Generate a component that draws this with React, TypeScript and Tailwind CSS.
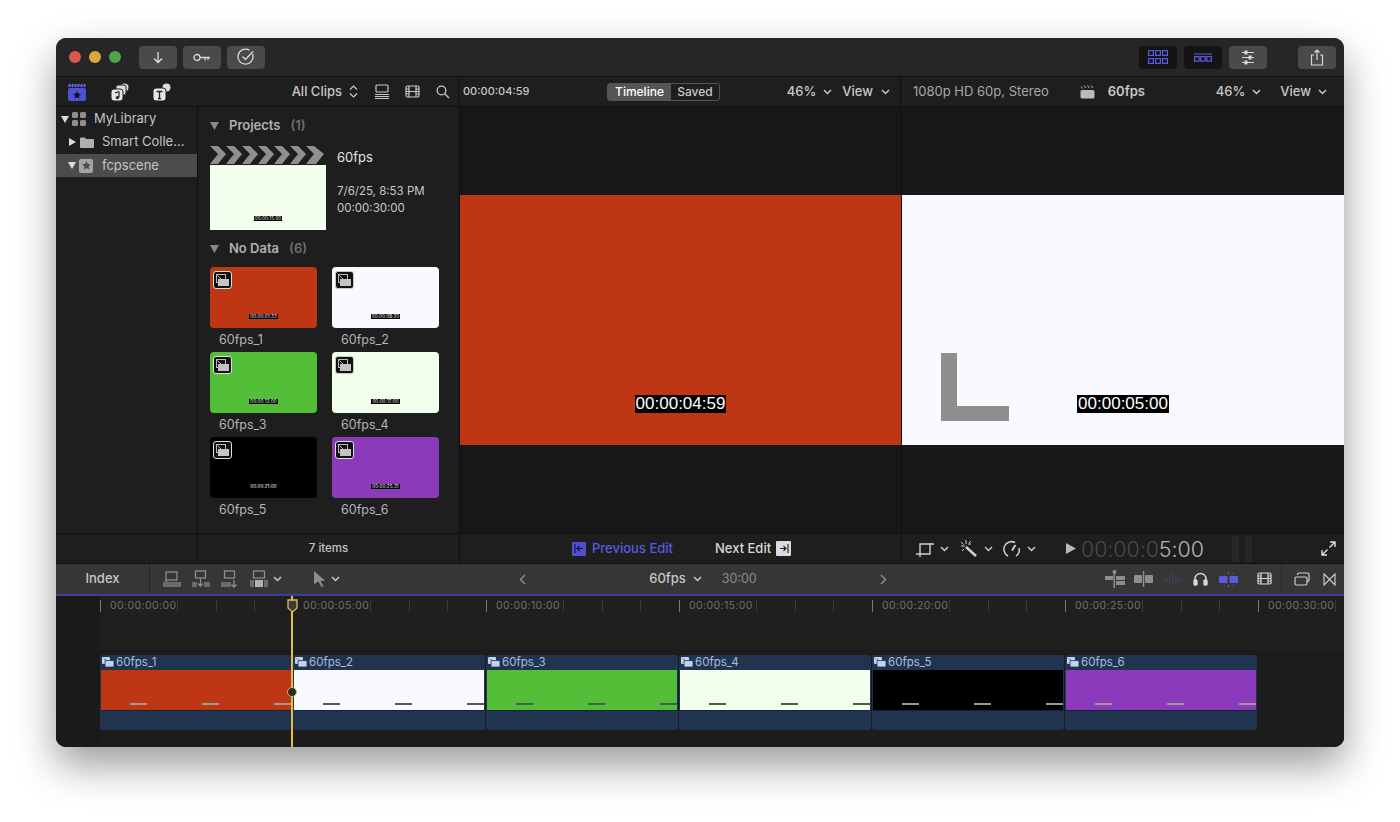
import React from "react";

const FONT = { fontFamily: "Inter, 'Liberation Sans', sans-serif" };

const Chevron = ({ className = "text-[#c8c8c8]" }: { className?: string }) => (
  <svg width="9" height="6" viewBox="0 0 9 6" className={className}>
    <path d="M1 1l3.5 3.5L8 1" fill="none" stroke="currentColor" strokeWidth="1.5" />
  </svg>
);

const TitleButton = ({ children, dark }: { children: React.ReactNode; dark?: boolean }) => (
  <div className={`w-[38px] h-[23px] rounded-[4px] flex items-center justify-center ${dark ? "bg-[#141414]" : "bg-[#4a4a4a]"}`}>
    {children}
  </div>
);

const ClapperIcon = () => (
  <svg width="20" height="20" viewBox="0 0 20 20">
    <rect x="1" y="6" width="18" height="13" rx="2" fill="#4f4fd8" />
    <path d="M2 5l1-3 M5 5l1-3 M8 5l1-3 M11 5l1-3 M14 5l1-3 M17 5l1-3" stroke="#6a6af0" strokeWidth="2" />
    <path d="M10 9l1.2 2.6 2.8.3-2.1 1.9.6 2.8-2.5-1.4-2.5 1.4.6-2.8L6 11.9l2.8-.3z" fill="#111" />
  </svg>
);

const MusicIcon = () => (
  <svg width="20" height="20" viewBox="0 0 20 20">
    <circle cx="14.5" cy="5.5" r="4.5" fill="#ddd" stroke="#222" />
    <rect x="6" y="3" width="10" height="10" rx="2" fill="#ddd" stroke="#222" />
    <rect x="1" y="7" width="12" height="12" rx="3" fill="#e6e6e6" stroke="#222" />
    <path d="M9 9.5v6M5 11l4-1.5" stroke="#222" strokeWidth="1.2" fill="none" />
    <circle cx="7.4" cy="15.6" r="1.6" fill="#222" />
  </svg>
);

const TitleIcon = () => (
  <svg width="20" height="20" viewBox="0 0 20 20">
    <circle cx="14.5" cy="5.5" r="4.5" fill="#ddd" stroke="#222" />
    <rect x="1" y="6" width="13" height="13" rx="3" fill="#e6e6e6" stroke="#222" />
    <path d="M4.5 9.5h6M7.5 9.5v7M6 16.5h3" stroke="#222" strokeWidth="1.3" fill="none" />
  </svg>
);

const StackIcon = () => (
  <svg width="14" height="16" viewBox="0 0 14 16" fill="none" stroke="#c8c8c8">
    <rect x="1" y="1" width="12" height="7" rx="1" strokeWidth="1.2" />
    <path d="M0 10.5h14M0 12.5h14M0 14.5h14" strokeWidth="1.2" />
  </svg>
);

const FilmIcon = ({ color = "#c8c8c8" }: { color?: string }) => (
  <svg width="15" height="14" viewBox="0 0 15 14" fill="none" stroke={color} strokeWidth="1.2">
    <rect x="1" y="1" width="13" height="11" rx="1.5" />
    <path d="M4 1v11M11 1v11M1 4h3M1 6.5h3M1 9h3M11 4h3M11 6.5h3M11 9h3M4 6.5h7" />
  </svg>
);

const ClipBadge = ({ size = 12, color = "#c3d2ee" }: { size?: number; color?: string }) => (
  <svg width={size} height={size * 0.84} viewBox="0 0 12 10">
    <rect x="0" y="0" width="8" height="7" rx="1" fill={color} />
    <rect x="3" y="3.5" width="9" height="6.5" rx="1" fill={color} stroke="#21344f" strokeWidth="0.8" />
    <path d="M2 1.5L4.5 4" stroke="#21344f" strokeWidth="0.8" />
  </svg>
);

const ThumbBadge = ({ light }: { light?: boolean }) => (
  <div className={`w-[19px] h-[18px] rounded-[3px] bg-[#111] border ${light ? "border-[#c9c9c9]" : "border-[#e0e0e0]"} flex items-center justify-center`}>
    <svg width="13" height="12" viewBox="0 0 13 12">
      <rect x="0.5" y="0.5" width="9" height="8" fill="none" stroke="#bbb" />
      <path d="M4 5h9v7H2V5z" fill="#c4c4c4" />
      <path d="M1.5 1.5L5 5" stroke="#bbb" />
    </svg>
  </div>
);

const Stamp = ({ text, dark }: { text: string; dark?: boolean }) => (
  <span className={`text-[4.5px] leading-[5px] tracking-[0.1px] px-[1px] ${dark ? "text-white" : "bg-black text-white"}`}>{text}</span>
);

const Thumb = ({ color, time, label, dark, light }: { color: string; time: string; label: string; dark?: boolean; light?: boolean }) => (
  <div className="w-[107px]">
    <div className="h-[61px] rounded-[4px] pt-[4px] pl-[3px] flex flex-col justify-between pb-[9px]" style={{ backgroundColor: color }}>
      <ThumbBadge light={light} />
      <div className="flex justify-center pr-[3px]">
        <Stamp text={time} dark={dark} />
      </div>
    </div>
    <div className="pl-[9px] mt-[5px] text-[12.5px] leading-[14px] text-[#b4b4b4]">{label}</div>
  </div>
);

const TimelineClip = ({ name, color, dark, firstOffset = 0 }: { name: string; color: string; dark?: boolean; firstOffset?: number }) => (
  <div className="w-[192px] h-[75px] rounded-[3px] bg-[#21344f] px-[1px] flex flex-col">
    <div className="h-[15px] flex items-center gap-[2px] pl-[1px] text-[11.5px] text-[#a9bcdd]">
      <ClipBadge />
      {name}
    </div>
    <div className="h-[41px] border-b border-[#14243d] flex items-end pb-[5px] justify-between" style={{ backgroundColor: color, paddingLeft: firstOffset }}>
      {[0, 1, 2].map((i) => (
        <span key={i} className={`w-[17px] h-[2px] ${dark ? "bg-[#999]" : "bg-[#555]"}`} />
      ))}
    </div>
  </div>
);

const Ruler = () => {
  const labels = ["00:00:00:00", "00:00:05:00", "00:00:10:00", "00:00:15:00", "00:00:20:00", "00:00:25:00", "00:00:30:00"];
  return (
    <div className="h-[17px] flex pt-[4px]">
      {labels.map((l, i) => (
        <div key={l} className="w-[193px] shrink-0 h-[12px] flex border-l border-[#7a7a7a]">
          <div className="w-[38.6px] shrink-0 border-r border-[#333]" />
          <div className="w-[38.6px] shrink-0 border-r border-[#3a3a3a]" />
          <div className="w-[38.6px] shrink-0 border-r border-[#3a3a3a]" />
          <div className="w-[38.6px] shrink-0 border-r border-[#3a3a3a]" />
          <span className="absolute ml-[9px] text-[10.5px] leading-[12px] tracking-[0.4px] text-[#707070]">{l}</span>
        </div>
      ))}
    </div>
  );
};

const Viewer = ({ bg, time, children }: { bg: string; time: string; children?: React.ReactNode }) => (
  <div className="flex-1 flex items-center bg-[#171717]">
    <div className="relative w-full h-[250px] flex items-end justify-center pb-[32px]" style={{ backgroundColor: bg }}>
      {children}
      <span className="bg-black text-white text-[17px] leading-[18px] px-[1px]" style={{ fontFamily: "'Liberation Sans', sans-serif" }}>{time}</span>
    </div>
  </div>
);

const EditIcons = () => (
  <>
    <svg width="18" height="16" viewBox="0 0 18 16" fill="none" stroke="#8e8e8e" strokeWidth="1.3"><rect x="3" y="1" width="11" height="8" /><path d="M3 9v2" /><rect x="0" y="11" width="18" height="5" fill="#6b6b6b" stroke="none" /></svg>
    <svg width="18" height="18" viewBox="0 0 18 18" fill="none" stroke="#8e8e8e" strokeWidth="1.3"><rect x="3.5" y="1" width="10" height="7" /><path d="M8.5 8v8M6 13.5L8.5 16l2.5-2.5" /><rect x="0" y="12" width="5" height="5" fill="#6b6b6b" stroke="none" /><rect x="12" y="12" width="6" height="5" fill="#6b6b6b" stroke="none" /></svg>
    <svg width="18" height="18" viewBox="0 0 18 18" fill="none" stroke="#8e8e8e" strokeWidth="1.3"><rect x="3.5" y="1" width="10" height="7" /><path d="M13 10v7M10.5 14.500L13 17l2.500-2.500" /><rect x="0" y="12" width="10" height="5" fill="#6b6b6b" stroke="none" /></svg>
    <div className="flex items-center gap-[5px]">
      <svg width="18" height="18" viewBox="0 0 18 18" fill="none" stroke="#8e8e8e" strokeWidth="1.3"><rect x="3.500" y="1" width="11" height="7" /><rect x="0" y="10" width="4" height="7" fill="#6b6b6b" stroke="none" /><rect x="5" y="10" width="8" height="7" fill="#b0b0b0" stroke="none" /><rect x="14" y="10" width="4" height="7" fill="#6b6b6b" stroke="none" /></svg>
      <Chevron />
    </div>
  </>
);

export default function App() {
  return (
    <div className="w-[1400px] h-[822px] bg-white pt-[38px] pl-[56px] overflow-hidden" style={FONT}>
      <div className="relative w-[1288px] h-[709px] rounded-[10px] overflow-hidden bg-[#1c1c1c] flex flex-col shadow-[0_18px_40px_rgba(0,0,0,0.4)]">
        {/* title bar */}
        <div className="h-[39px] shrink-0 bg-[#262626] border-b border-[#111] flex items-center pl-[13px] pr-[8px]">
          <div className="flex gap-[8px] mr-[18px]">
            <span className="w-[12px] h-[12px] rounded-full bg-[#d9574e]" />
            <span className="w-[12px] h-[12px] rounded-full bg-[#d9a93c]" />
            <span className="w-[12px] h-[12px] rounded-full bg-[#4da64a]" />
          </div>
          <div className="flex gap-[6px]">
            <TitleButton>
              <svg width="12" height="13" viewBox="0 0 12 13" fill="none" stroke="#e0e0e0" strokeWidth="1.3"><path d="M6 1v10.500M2 7.500l4 4 4-4" /></svg>
            </TitleButton>
            <TitleButton>
              <svg width="18" height="9" viewBox="0 0 18 9" fill="none" stroke="#d8d8d8" strokeWidth="1.3"><circle cx="4" cy="4.500" r="3" /><path d="M7 4.500h10M12 4.500v3M15 4.500v2.500" /></svg>
            </TitleButton>
            <TitleButton>
              <svg width="18" height="18" viewBox="0 0 18 18" fill="none" stroke="#d8d8d8" strokeWidth="1.3"><path d="M15.500 6A7.500 7.500 0 1 1 12.500 2.300" /><path d="M5.500 8.500l3 3L16 3.500" /></svg>
            </TitleButton>
          </div>
          <div className="flex-1" />
          <div className="flex gap-[7px] mr-[31px]">
            <TitleButton dark>
              <svg width="20" height="14" viewBox="0 0 20 14" fill="none" stroke="#5a5ae6" strokeWidth="1.2"><rect x="0.600" y="0.600" width="4.800" height="4.800" /><rect x="7.600" y="0.600" width="4.800" height="4.800" /><rect x="14.600" y="0.600" width="4.800" height="4.800" /><rect x="0.600" y="8.600" width="4.800" height="4.800" /><rect x="7.600" y="8.600" width="4.800" height="4.800" /><rect x="14.600" y="8.600" width="4.800" height="4.800" /></svg>
            </TitleButton>
            <TitleButton dark>
              <svg width="18" height="9" viewBox="0 0 18 9" fill="none" stroke="#5a5ae6" strokeWidth="1.200"><path d="M0 1h18" /><rect x="0.600" y="3.600" width="4.500" height="4.500" /><rect x="6.700" y="3.600" width="4.500" height="4.500" /><rect x="12.800" y="3.600" width="4.500" height="4.500" /></svg>
            </TitleButton>
            <TitleButton>
              <svg width="14" height="15" viewBox="0 0 14 15" fill="none" stroke="#d8d8d8" strokeWidth="1"><path d="M1 2.500h12M1 7.500h12M1 12.500h12" /><rect x="4" y="1" width="2" height="3" fill="#d8d8d8" /><rect x="8" y="6" width="2" height="3" fill="#d8d8d8" /><rect x="4" y="11" width="2" height="3" fill="#d8d8d8" /></svg>
            </TitleButton>
          </div>
          <TitleButton>
            <svg width="14" height="17" viewBox="0 0 14 17" fill="none" stroke="#d8d8d8" strokeWidth="1.200"><path d="M4 6H1.500v10h11V6H10" /><path d="M7 11V1M4.500 3.500L7 1l2.500 2.500" /></svg>
          </TitleButton>
        </div>

        {/* toolbar row */}
        <div className="h-[30px] shrink-0 bg-[#1e1e1e] border-b border-[#101010] flex items-center text-[13px] font-medium text-[#c8c8c8]">
          <div className="w-[403px] shrink-0 flex items-center pl-[11px] pr-[8px] border-r border-[#101010] h-full">
            <ClapperIcon />
            <div className="ml-[23px]"><MusicIcon /></div>
            <div className="ml-[22px]"><TitleIcon /></div>
            <div className="flex-1" />
            <span>All Clips</span>
            <svg width="9" height="13" viewBox="0 0 9 13" fill="none" stroke="#c8c8c8" strokeWidth="1.200" className="ml-[7px]"><path d="M1 4.500L4.500 1 8 4.500M1 8.500L4.500 12 8 8.500" /></svg>
            <div className="ml-[17px]"><StackIcon /></div>
            <div className="ml-[16px]"><FilmIcon /></div>
            <svg width="14" height="14" viewBox="0 0 14 14" fill="none" stroke="#c8c8c8" strokeWidth="1.300" className="ml-[16px]"><circle cx="5.500" cy="5.500" r="4.300" /><path d="M8.800 8.800L13 13" /></svg>
          </div>
          <div className="w-[442px] shrink-0 flex items-center pl-[4px] pr-[10px] h-full border-r border-[#101010]">
            <span className="text-[11px] w-[144px]">00:00:04:59</span>
            <div className="h-[18px] flex rounded-[3px] border border-[#555] text-[12px] leading-[16px]">
              <span className="w-[63px] bg-[#555] text-white text-center">Timeline</span>
              <span className="w-[48px] text-center">Saved</span>
            </div>
            <div className="flex-1" />
            <span>46%</span>
            <span className="ml-[7px]"><Chevron /></span>
            <span className="ml-[10px]">View</span>
            <span className="ml-[8px]"><Chevron /></span>
          </div>
          <div className="flex-1 flex items-center pl-[12px] pr-[17px]">
            <span className="font-normal text-[13px] text-[#a8a8a8]">1080p HD 60p, Stereo</span>
            <svg width="15" height="14" viewBox="0 0 15 14" className="ml-[31px]"><path d="M1 1.500l2 2M4 .500l2 2.500M7.500 .500l2 2.500M11 .500l2 2.500" stroke="#bbb" /><rect x="0.500" y="5" width="14" height="8.500" rx="1.500" fill="#bbb" /></svg>
            <span className="ml-[13px] font-semibold">60fps</span>
            <div className="flex-1" />
            <span>46%</span>
            <span className="ml-[7px]"><Chevron /></span>
            <span className="ml-[19px]">View</span>
            <span className="ml-[7px]"><Chevron /></span>
          </div>
        </div>

        {/* main panels */}
        <div className="h-[426px] shrink-0 flex">
          {/* sidebar */}
          <div className="w-[142px] shrink-0 bg-[#1e1e1e] border-r border-[#101010] text-[13px] text-[#c4c4c4] pt-[2px]">
            <div className="h-[20px] flex items-center pl-[5px]">
              <svg width="8" height="7" viewBox="0 0 8 7" fill="#ddd"><path d="M0 0h8L4 7z" /></svg>
              <svg width="16" height="16" viewBox="0 0 16 16" fill="#8e8e8e" className="ml-[2px]"><rect x="1" y="1" width="6" height="6" rx="1.500" /><rect x="9" y="1" width="6" height="6" rx="1.500" /><rect x="1" y="9" width="6" height="6" rx="1.500" /><rect x="9" y="9" width="6" height="6" rx="1.500" /></svg>
              <span className="ml-[7px]">MyLibrary</span>
            </div>
            <div className="h-[24px] mt-[1px] flex items-center pl-[13px]">
              <svg width="7" height="8" viewBox="0 0 7 8" fill="#ddd"><path d="M0 0l7 4-7 4z" /></svg>
              <svg width="14" height="11" viewBox="0 0 14 11" fill="#b0b0b0" className="ml-[4px]"><path d="M0 1.500A1 1 0 0 1 1 .500h4l1 1.500h7a1 1 0 0 1 1 1v7a1 1 0 0 1-1 1H1a1 1 0 0 1-1-1z" /></svg>
              <span className="ml-[8px] truncate w-[83px] whitespace-nowrap">Smart Collections</span>
            </div>
            <div className="h-[23px] bg-[#4c4c4c] flex items-center pl-[12px]">
              <svg width="8" height="7" viewBox="0 0 8 7" fill="#ddd"><path d="M0 0h8L4 7z" /></svg>
              <div className="w-[14px] h-[14px] ml-[3px] rounded-[2px] bg-[#a4a4a4] flex items-center justify-center">
                <svg width="9" height="9" viewBox="0 0 10 10" fill="#4c4c4c"><path d="M5 0l1.500 3.300 3.500.4-2.600 2.300.7 3.500L5 7.800 1.900 9.500l.7-3.500L0 3.700l3.500-.4z" /></svg>
              </div>
              <span className="ml-[9px]">fcpscene</span>
            </div>
          </div>

          {/* browser */}
          <div className="w-[262px] shrink-0 bg-[#1e1e1e] border-r border-[#101010] flex flex-col">
            <div className="flex-1 pl-[12px]">
              <div className="h-[38px] flex items-center text-[13px] font-semibold text-[#b0b0b0]">
                <svg width="9" height="8" viewBox="0 0 9 8" fill="#8a8a8a"><path d="M0 0h9L4.500 8z" /></svg>
                <span className="ml-[10px]">Projects</span>
                <span className="ml-[10px] text-[#6f6f6f]">(1)</span>
              </div>
              <div className="flex">
                <div className="w-[116px]">
                  <svg width="116" height="20" viewBox="0 0 116 20" className="block">
                    <path d="M0 1h8l8 8-8 10H0l8-10z M16 1h8l8 8-8 10h-8l8-10z M32 1h8l8 8-8 10h-8l8-10z M48 1h8l8 8-8 10h-8l8-10z M64 1h8l8 8-8 10h-8l8-10z M80 1h8l8 8-8 10h-8l8-10z M96 1h8l10 8-8 10h-10l8-10z" fill="#8f8f8f" />
                  </svg>
                  <div className="h-[65px] bg-[#f1ffec] flex items-end justify-center pb-[9px]">
                    <Stamp text="00:00:15:00" />
                  </div>
                </div>
                <div className="ml-[11px] pt-[4px] text-[#c8c8c8]">
                  <div className="text-[13px] leading-[16px] text-[#e4e4e4]">60fps</div>
                  <div className="mt-[19px] text-[11.5px] leading-[14px]">7/6/25, 8:53 PM</div>
                  <div className="mt-[3px] text-[11.5px] leading-[14px]">00:00:30:00</div>
                </div>
              </div>
              <div className="h-[37px] flex items-center text-[13px] font-semibold text-[#b0b0b0]">
                <svg width="9" height="8" viewBox="0 0 9 8" fill="#8a8a8a"><path d="M0 0h9L4.500 8z" /></svg>
                <span className="ml-[10px]">No Data</span>
                <span className="ml-[10px] text-[#6f6f6f]">(6)</span>
              </div>
              <div className="grid grid-cols-[107px_107px] gap-x-[15px] gap-y-[5px] mt-[0px]">
                <Thumb color="#bf3615" time="00:00:01:33" label="60fps_1" />
                <Thumb color="#f8faff" time="00:00:08:20" label="60fps_2" light />
                <Thumb color="#53bf38" time="00:00:12:00" label="60fps_3" />
                <Thumb color="#f1ffec" time="00:00:17:00" label="60fps_4" light />
                <Thumb color="#000000" time="00:00:21:00" label="60fps_5" dark />
                <Thumb color="#8b3abb" time="00:00:25:31" label="60fps_6" />
              </div>
            </div>
          </div>

          {/* viewers */}
          <div className="w-[442px] shrink-0 border-r border-[#101010] flex"><Viewer bg="#bf3615" time="00:00:04:59" /></div>
          <div className="flex-1 flex">
            <Viewer bg="#f8faff" time="00:00:05:00">
              <svg width="68" height="68" viewBox="0 0 68 68" className="absolute left-[39px] top-[158px]"><path d="M0 0h16v53h52v15H0z" fill="#8f8f8f" /></svg>
            </Viewer>
          </div>
        </div>

        {/* viewer footer */}
        <div className="h-[30px] shrink-0 border-t border-[#101010] bg-[#1e1e1e] flex text-[13px] font-medium">
          <div className="w-[142px] shrink-0 border-r border-[#101010]" />
          <div className="w-[262px] shrink-0 border-r border-[#101010] flex items-center justify-center text-[11.5px] text-[#c4c4c4]">7 items</div>
          <div className="w-[442px] shrink-0 border-r border-[#101010] flex items-center pl-[112px]">
            <div className="w-[14px] h-[14px] rounded-[1px] bg-[#4f4fd0] flex items-center justify-center">
              <svg width="10" height="9" viewBox="0 0 10 9" fill="none" stroke="#101040" strokeWidth="1.100"><path d="M1 0v9M9 4.500H3M5.500 2L3 4.500 5.500 7" /></svg>
            </div>
            <span className="ml-[6px] text-[#5a5ae0]">Previous Edit</span>
            <span className="ml-[42px] text-[#d8d8d8]">Next Edit</span>
            <div className="ml-[5px] w-[15px] h-[15px] rounded-[1px] bg-[#dcdcdc] flex items-center justify-center">
              <svg width="10" height="9" viewBox="0 0 10 9" fill="none" stroke="#222" strokeWidth="1.100"><path d="M9 0v9M1 4.500h6M4.500 2L7 4.500 4.500 7" /></svg>
            </div>
          </div>
          <div className="flex-1 flex items-center pl-[14px] pr-[8px]">
            <svg width="18" height="18" viewBox="0 0 18 18" fill="none" stroke="#d0d0d0" strokeWidth="1.400"><path d="M0 14h14V3M4 17V4h14" /></svg>
            <span className="ml-[6px]"><Chevron /></span>
            <svg width="19" height="18" viewBox="0 0 19 18" fill="none" stroke="#d0d0d0" className="ml-[10px]"><path d="M7 7l10 9" strokeWidth="2.600" /><path d="M7 0v4M2 6h4M12 4H9M2 2l2.500 2.500M3 11l2-2M12 1l-2 2" strokeWidth="1" /></svg>
            <span className="ml-[6px]"><Chevron /></span>
            <svg width="18" height="18" viewBox="0 0 18 18" fill="none" stroke="#d0d0d0" strokeWidth="1.500" className="ml-[10px]"><path d="M5 16A7.500 7.500 0 0 1 12 2.500M13 16a7.500 7.500 0 0 0 3-8" /><path d="M9 10.500L12.500 5" strokeWidth="2" /></svg>
            <span className="ml-[6px]"><Chevron /></span>
            <svg width="10" height="11" viewBox="0 0 10 11" fill="#b8b8b8" className="ml-[30px]"><path d="M0 0l10 5.500L0 11z" /></svg>
            <span className="ml-[5px] text-[21.5px] font-light tracking-[-0.1px] text-[#4a4a4a] leading-[24px]">00:00:0</span>
            <span className="text-[21.5px] font-light tracking-[-0.1px] text-[#b4b4b4] leading-[24px]">5:00</span>
            <div className="ml-[28px] flex gap-[6px]">
              <span className="w-[7px] h-[26px] bg-[#262626]" />
              <span className="w-[7px] h-[26px] bg-[#262626]" />
            </div>
            <div className="flex-1" />
            <svg width="15" height="15" viewBox="0 0 15 15" fill="none" stroke="#e0e0e0" strokeWidth="1.400"><path d="M9 1h5v5M14 1L8.500 6.500M6 14H1V9M1 14l5.500-5.500" /></svg>
          </div>
        </div>

        {/* timeline toolbar */}
        <div className="h-[33px] shrink-0 bg-[#363636] border-t border-[#101010] border-b-2 border-b-[#403d9c] flex items-center text-[13px] font-medium text-[#c8c8c8]">
          <div className="w-[94px] h-full shrink-0 border-r border-[#262626] flex items-center justify-center pl-[0px] text-[13px]">Index</div>
          <div className="w-[348px] shrink-0 flex items-center pl-[13px] gap-[11px]">
            <EditIcons />
            <div className="ml-[20px] flex items-center gap-[5px]">
              <svg width="13" height="16" viewBox="0 0 13 16" fill="#8e8e8e"><path d="M1 0l11 9.500-4.500.5 3 5-2 1-3-5.500L1 13z" /></svg>
              <Chevron />
            </div>
          </div>
          <svg width="7" height="11" viewBox="0 0 7 11" fill="none" stroke="#8a8a8a" strokeWidth="1.500" className="ml-[21px]"><path d="M6 1L1.500 5.500 6 10" /></svg>
          <div className="w-[354px] shrink-0 flex items-center justify-center">
            <span>60fps</span>
            <span className="ml-[7px]"><Chevron /></span>
            <span className="ml-[20px] font-normal text-[#8a8a8a] text-[12.5px]">30:00</span>
          </div>
          <svg width="7" height="11" viewBox="0 0 7 11" fill="none" stroke="#8a8a8a" strokeWidth="1.500"><path d="M1 1l4.500 4.500L1 10" /></svg>
          <div className="flex-1 flex items-center h-full pl-[218px]">
            <svg width="20" height="18" viewBox="0 0 20 18" fill="#8e8e8e" className="shrink-0"><rect x="8.500" y="0" width="1.500" height="18" /><rect x="0" y="6" width="8" height="4" /><rect x="11" y="6" width="9" height="4" /><rect x="11" y="11" width="9" height="4" /><circle cx="9.500" cy="2" r="2" /></svg>
            <svg width="19" height="16" viewBox="0 0 19 16" fill="#8e8e8e" className="ml-[9px] shrink-0"><rect x="8.800" y="0" width="1.500" height="16" /><rect x="0" y="4" width="8" height="8" rx="1" /><rect x="11" y="4" width="8" height="8" rx="1" /></svg>
            <svg width="19" height="14" viewBox="0 0 19 14" fill="none" stroke="#3f3f6a" strokeWidth="1.200" className="ml-[10px] shrink-0"><path d="M1 6v3M4 5v5M7 3v8M10 0v14M13 4v7M16 5v5M18 6v3" /></svg>
            <svg width="15" height="14" viewBox="0 0 15 14" fill="none" stroke="#d8d8d8" strokeWidth="1.400" className="ml-[11px] shrink-0"><path d="M2 9V7a5.500 5.500 0 0 1 11 0v2" /><rect x="1" y="8" width="3" height="5" rx="1" fill="#d8d8d8" /><rect x="11" y="8" width="3" height="5" rx="1" fill="#d8d8d8" /></svg>
            <svg width="19" height="15" viewBox="0 0 19 15" className="ml-[11px] shrink-0"><rect x="0" y="4" width="8.500" height="7" rx="1" fill="#5a5ae0" /><rect x="10.500" y="4" width="8.500" height="7" rx="1" fill="#5a5ae0" /><path d="M9.500 0v2M9.500 13v2M5 1v1M14 1v1M5 13v1M14 13v1" stroke="#5a5ae0" strokeWidth="1.200" /></svg>
            <div className="ml-[19px] shrink-0"><FilmIcon color="#d8d8d8" /></div>
            <div className="ml-[9px] w-px h-full bg-[#2a2a2a] shrink-0" />
            <svg width="16" height="14" viewBox="0 0 16 14" fill="none" stroke="#d0d0d0" strokeWidth="1.200" className="ml-[12px] shrink-0"><rect x="1" y="5" width="12" height="8" rx="1.500" /><path d="M3.500 3V2.500a1.500 1.500 0 0 1 1.500-1.500h8.500a1.500 1.500 0 0 1 1.500 1.500V8a1.500 1.500 0 0 1-1.500 1.500H13" /></svg>
            <svg width="13" height="13" viewBox="0 0 13 13" fill="none" stroke="#d0d0d0" strokeWidth="1.100" className="ml-[13px] shrink-0"><path d="M1 1l11 11V1L1 12z" /></svg>
          </div>
        </div>

        {/* timeline */}
        <div className="relative flex-1 flex bg-[#1f1f1f] overflow-hidden">
          <div className="w-[44px] shrink-0 bg-[#1a1a1a]" />
          <div className="flex-1 min-w-0 flex flex-col">
            <Ruler />
            <div className="h-[37px] bg-[#1f1f1f]" />
            <div className="bg-[#1c1c1c] h-[96px] pt-[5px]">
              <div className="flex gap-[1px] pl-[0px]">
                <TimelineClip name="60fps_1" color="#bf3615" dark firstOffset={29} />
                <TimelineClip name="60fps_2" color="#f8faff" firstOffset={29} />
                <TimelineClip name="60fps_3" color="#53bf38" firstOffset={29} />
                <TimelineClip name="60fps_4" color="#f1ffec" firstOffset={29} />
                <TimelineClip name="60fps_5" color="#000000" dark firstOffset={29} />
                <TimelineClip name="60fps_6" color="#8b3abb" dark firstOffset={29} />
              </div>
            </div>
            <div className="flex-1 bg-[#212121]" />
          </div>
          {/* playhead */}
          <div className="absolute left-[235px] top-0 bottom-0 w-[2px] bg-[#e4bd45]" />
          <svg width="11" height="14" viewBox="0 0 11 14" className="absolute left-[230.500px] top-[3px]"><path d="M1 1h9v8l-4.500 4L1 9z" fill="#3a3a3a" stroke="#e4bd45" strokeWidth="1.300" /></svg>
          <div className="absolute left-[231px] top-[91px] w-[10px] h-[10px] rounded-full bg-[#2a2a2a] border border-[#e4bd45]" />
        </div>
      </div>
    </div>
  );
}
